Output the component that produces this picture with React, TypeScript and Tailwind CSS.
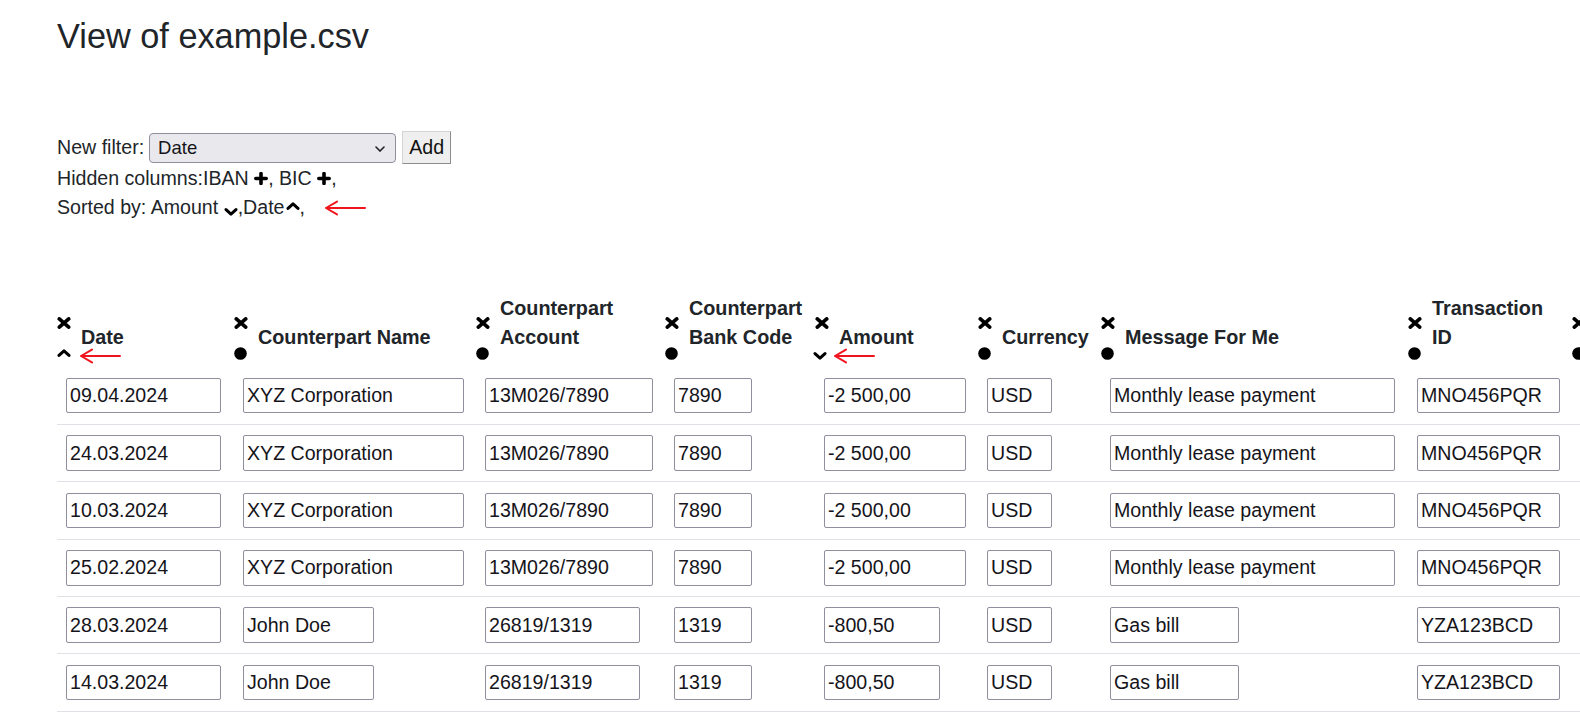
type RowT = {
  date: string;
  name: string;
  account: string;
  bank: string;
  amount: string;
  currency: string;
  message: string;
  txId: string;
  extra: string;
};

type ColumnT = {
  key: keyof RowT;
  label: string[];
  width: string;
  sort?: "up" | "down";
  arrow?: string;
};

// last column only peeks in at the right edge
const columns: ColumnT[] = [
  { key: "date", label: ["Date"], width: "w-[177px]", sort: "up", arrow: "left-[22px]" },
  { key: "name", label: ["Counterpart Name"], width: "w-[242px]" },
  { key: "account", label: ["Counterpart", "Account"], width: "w-[189px]" },
  { key: "bank", label: ["Counterpart", "Bank Code"], width: "w-[150px]" },
  { key: "amount", label: ["Amount"], width: "w-[163px]", sort: "down", arrow: "left-[18px]" },
  { key: "currency", label: ["Currency"], width: "w-[123px]" },
  { key: "message", label: ["Message For Me"], width: "w-[307px]" },
  { key: "txId", label: ["Transaction", "ID"], width: "w-[164px]" },
  { key: "extra", label: [], width: "w-[200px]" },
];

const lease = {
  name: "XYZ Corporation",
  account: "13M026/7890",
  bank: "7890",
  amount: "-2 500,00",
  currency: "USD",
  message: "Monthly lease payment",
  txId: "MNO456PQR",
  extra: "",
};

const gas = {
  name: "John Doe",
  account: "26819/1319",
  bank: "1319",
  amount: "-800,50",
  currency: "USD",
  message: "Gas bill",
  txId: "YZA123BCD",
  extra: "",
};

const rows: RowT[] = [
  { date: "09.04.2024", ...lease },
  { date: "24.03.2024", ...lease },
  { date: "10.03.2024", ...lease },
  { date: "25.02.2024", ...lease },
  { date: "28.03.2024", ...gas },
  { date: "14.03.2024", ...gas },
];

// input widths follow the length of the value, as in the original page
const inputWidths: Record<string, string> = {
  "XYZ Corporation": "w-[221px]",
  "John Doe": "w-[131px]",
  "13M026/7890": "w-[168px]",
  "26819/1319": "w-[155px]",
  "7890": "w-[78px]",
  "1319": "w-[78px]",
  "-2 500,00": "w-[142px]",
  "-800,50": "w-[116px]",
  USD: "w-[65px]",
  "Monthly lease payment": "w-[285px]",
  "Gas bill": "w-[129px]",
  MNO456PQR: "w-[143px]",
  YZA123BCD: "w-[143px]",
};

function widthFor(value: string) {
  return inputWidths[value] ?? "w-[155px]";
}

function XIcon() {
  return (
    <svg viewBox="0 0 14 12" className="block h-[12px] w-[14px]">
      <path
        d="M2.3 1.9L11.7 10.1M11.7 1.9L2.3 10.1"
        stroke="#000"
        strokeWidth="3.7"
        strokeLinecap="round"
        fill="none"
      />
    </svg>
  );
}

function Dot() {
  return (
    <svg viewBox="0 0 13 13" className="block h-[13px] w-[13px] translate-y-[1px]">
      <circle cx="6.5" cy="6.5" r="6.3" fill="#000" />
    </svg>
  );
}

function Plus({ className = "" }: { className?: string }) {
  return (
    <svg viewBox="0 0 14 13" className={"inline-block h-[13px] w-[14px] align-[-0.5px] " + className}>
      <path d="M7 1.6V11.4M1.8 6.5H12.2" stroke="#000" strokeWidth="3.6" strokeLinecap="round" fill="none" />
    </svg>
  );
}

function Chevron({ dir, className = "" }: { dir: "up" | "down"; className?: string }) {
  return (
    <svg viewBox="0 0 14 8" className={"h-[8px] w-[14px] " + className}>
      <path
        d={dir === "up" ? "M2 6.4L7 1.8L12 6.4" : "M2 1.6L7 6.2L12 1.6"}
        stroke="#000"
        strokeWidth="3"
        strokeLinecap="round"
        strokeLinejoin="round"
        fill="none"
      />
    </svg>
  );
}

function RedArrow({ className = "" }: { className?: string }) {
  return (
    <svg viewBox="0 0 42 16" className={"h-[16px] w-[42px] " + className}>
      <path
        d="M2 8H41M2 8L13 1.6M2 8L13 14.4"
        stroke="#f0141e"
        strokeWidth="2"
        strokeLinecap="round"
        fill="none"
      />
    </svg>
  );
}

function HeaderCell({ col }: { col: ColumnT }) {
  return (
    <th className={"relative p-0 pt-[8px] text-left align-bottom " + col.width}>
      <div className="flex items-end">
        <div className="flex w-[14px] flex-col">
          <div className="flex h-[29.4px] items-center">
            <XIcon />
          </div>
          <div className="flex h-[29.4px] items-center">
            {col.sort === "up" && <Chevron dir="up" className="block" />}
            {col.sort === "down" && <Chevron dir="down" className="-ml-[2px] block translate-y-[3px]" />}
            {!col.sort && <Dot />}
          </div>
        </div>
        <div className="ml-[10px] pb-[14.7px] text-[19.8px] font-bold leading-[29.4px] whitespace-nowrap">
          {col.label.map((line) => (
            <div key={line}>{line}</div>
          ))}
        </div>
      </div>
      {col.arrow && <RedArrow className={"absolute top-[62px] " + col.arrow} />}
    </th>
  );
}

export default function App() {
  return (
    <div className="h-screen w-full overflow-hidden bg-white pl-[57px] pt-[16px] font-['Liberation_Sans',Arial,sans-serif] text-[19.6px] text-[#212529]">
      <h2 className="text-[34.3px] leading-[1.2] font-normal">View of example.csv</h2>

      <div className="mt-[74.5px] flex h-[32px] items-center">
        <span>New filter:</span>
        <div className="relative ml-[5px]">
          <select
            defaultValue="Date"
            className="block h-[30px] w-[247px] appearance-none rounded-[4px] border border-[#8f8f9d] bg-[#e9e9ed] pl-[8px] text-[18.5px] text-[#15141a] outline-none"
          >
            {columns
              .filter((c) => c.label.length)
              .map((c) => (
                <option key={c.key}>{c.label.join(" ")}</option>
              ))}
          </select>
          <svg viewBox="0 0 10 6" className="pointer-events-none absolute right-[11px] top-[13px] h-[6px] w-[10px]">
            <path d="M1 1L5 5L9 1" stroke="#222" strokeWidth="1.6" fill="none" strokeLinecap="round" />
          </svg>
        </div>
        <button className="ml-[6px] h-[33px] w-[49px] border border-[#d4d4d4] border-r-[#8c8c8c] border-b-[#8c8c8c] bg-[#efefef] text-[19.6px] text-[#111]">
          Add
        </button>
      </div>

      <div className="leading-[29.4px]">
        Hidden columns:IBAN <Plus />, BIC <Plus />,
      </div>
      <div className="leading-[29.4px]">
        Sorted by: Amount <Chevron dir="down" className="inline-block align-[-1.8px]" />,Date
        <Chevron dir="up" className="ml-[1px] inline-block align-[3.8px]" />,
        <RedArrow className="ml-[19px] inline-block align-[-1.8px]" />
      </div>

      <table className="mt-[63.5px] w-[1715px] table-fixed border-collapse">
        <thead>
          <tr>
            {columns.map((col) => (
              <HeaderCell key={col.key} col={col} />
            ))}
          </tr>
        </thead>
        <tbody>
          {rows.map((row, i) => (
            <tr key={i} className="border-b border-[#dee2e6]">
              {columns.map((col) => (
                <td key={col.key} className="py-[10.45px] pl-[9px] align-middle">
                  <input
                    readOnly
                    value={row[col.key]}
                    className={
                      "block h-[35.5px] rounded-[2px] border border-[#8f8f9d] bg-white px-[3px] text-[19.6px] text-[#15141a] outline-none " +
                      widthFor(row[col.key])
                    }
                  />
                </td>
              ))}
            </tr>
          ))}
        </tbody>
      </table>
    </div>
  );
}
